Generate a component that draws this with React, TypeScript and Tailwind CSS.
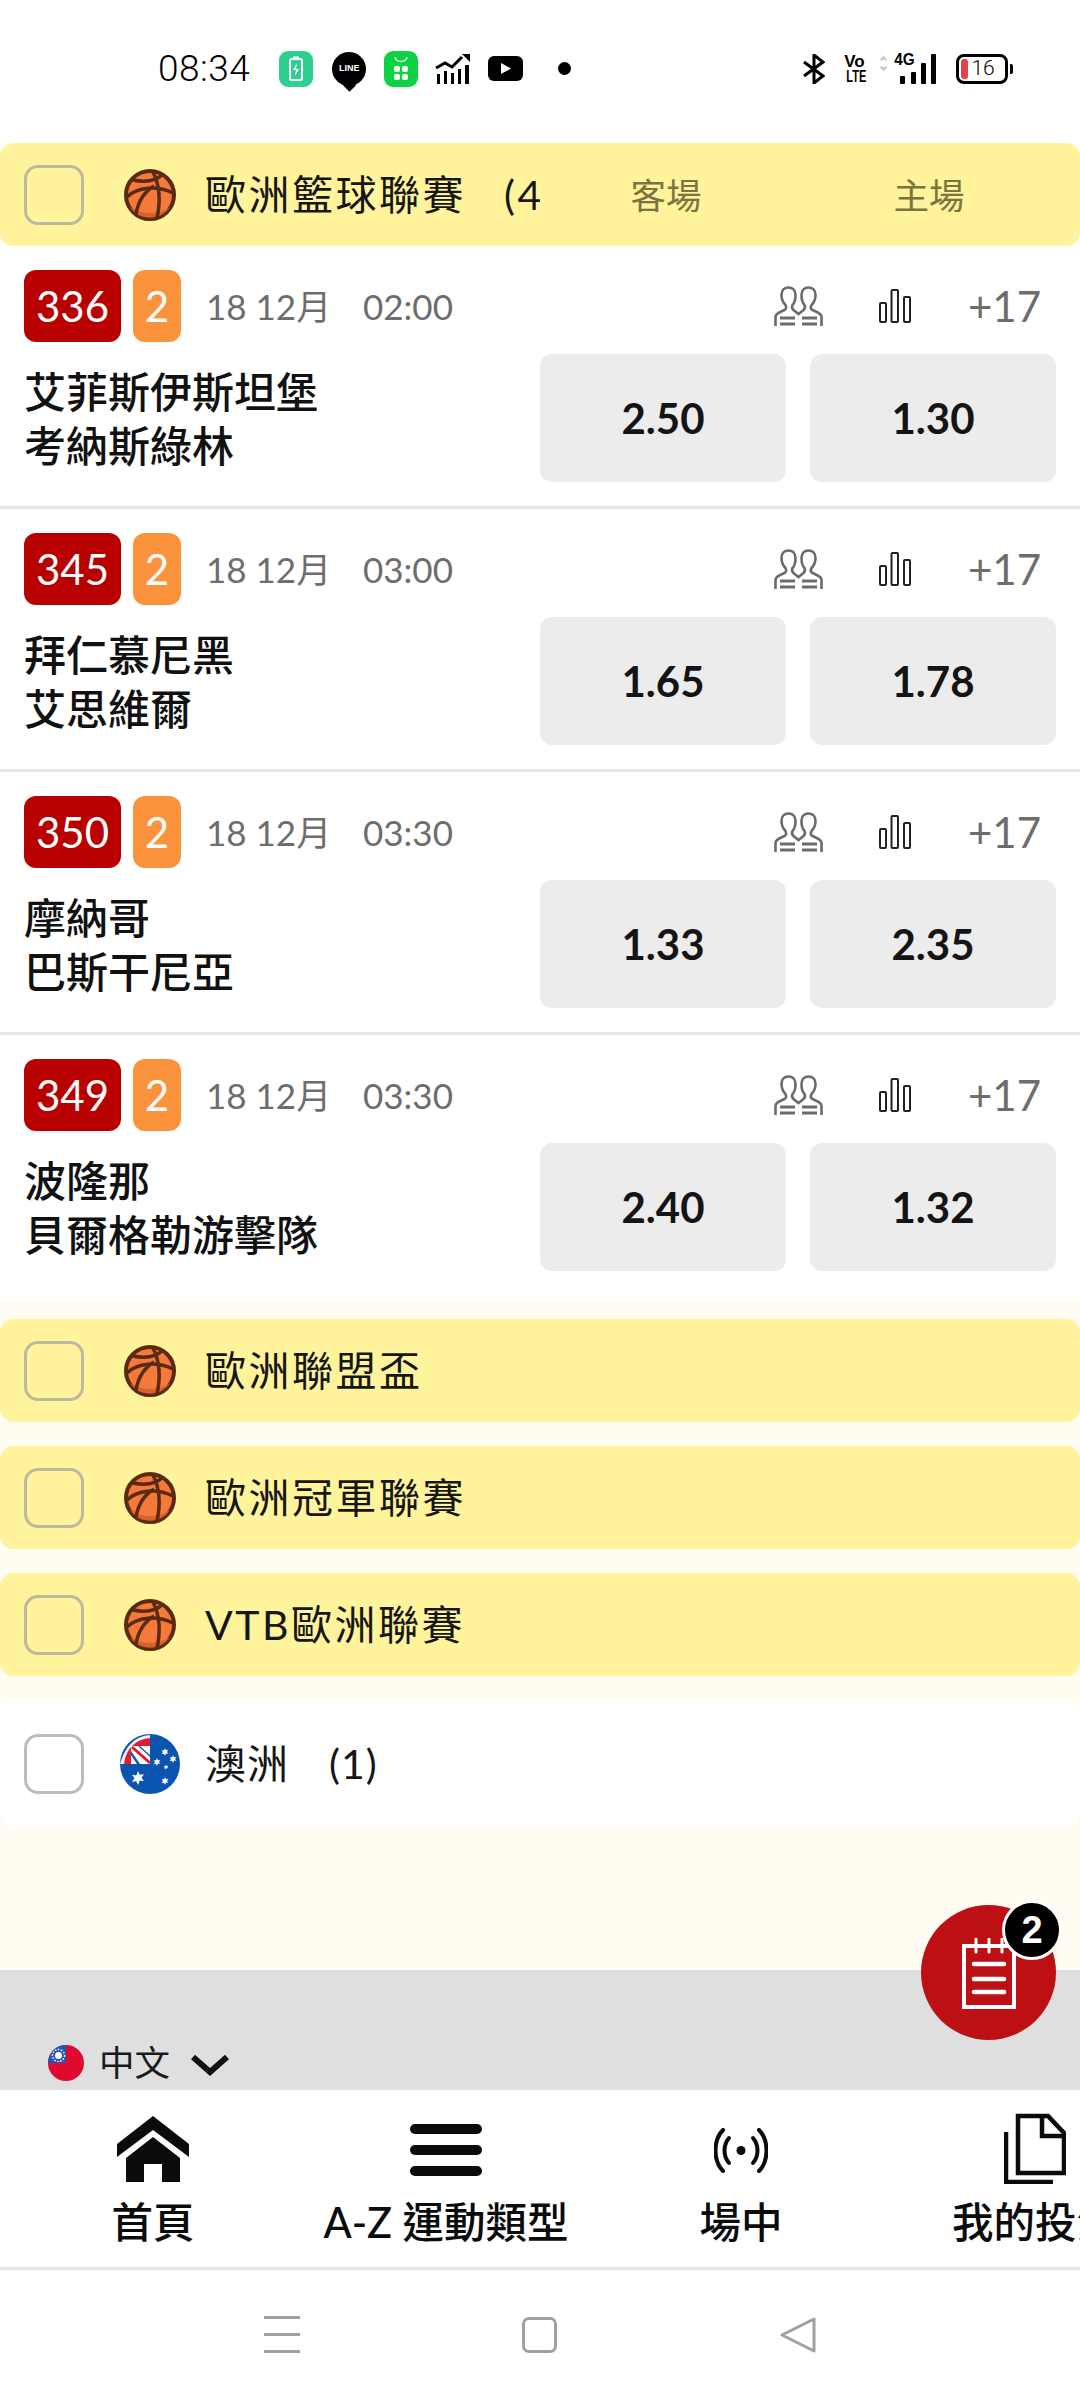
import React from "react";

const matches = [
  { id: "336", time: "02:00", home: "艾菲斯伊斯坦堡", away: "考納斯綠林", a: "2.50", b: "1.30" },
  { id: "345", time: "03:00", home: "拜仁慕尼黑", away: "艾思維爾", a: "1.65", b: "1.78" },
  { id: "350", time: "03:30", home: "摩納哥", away: "巴斯干尼亞", a: "1.33", b: "2.35" },
  { id: "349", time: "03:30", home: "波隆那", away: "貝爾格勒游擊隊", a: "2.40", b: "1.32" },
];

const Ball = () => (
  <svg viewBox="0 0 52 52" className="w-[52px] h-[52px] shrink-0">
    <circle cx="26" cy="26" r="24" fill="#f4793b" stroke="#5a2a12" strokeWidth="4" />
    <path d="M6 38a24 24 0 0 0 40 0c-12 8-28 8-40 0z" fill="#d9622b" />
    <g fill="none" stroke="#5a2a12" strokeWidth="3.500">
      <path d="M9 11c10 2 22 2 30-6" />
      <path d="M3 28c10-10 30-12 46-4" />
      <path d="M29 3c6 12 8 28 4 46" />
      <path d="M12 45c2-12 8-22 18-28" />
    </g>
  </svg>
);

const Checkbox = ({ color }: { color: string }) => (
  <div className={`w-[60px] h-[60px] rounded-[14px] border-[3px] shrink-0 ${color}`} />
);

const League = ({ name }: { name: string }) => (
  <div className="h-[103px] bg-[#fff39b] rounded-[14px] flex items-center pl-[24px]">
    <Checkbox color="border-[#bdb9a0]" />
    <div className="ml-[40px]">
      <Ball />
    </div>
    <span className="ml-[29px] text-[41px] tracking-[2.500px] text-[#161616]">{name}</span>
  </div>
);

const People = () => (
  <svg viewBox="0 0 49 40" className="w-[49px] h-[40px]" fill="none" stroke="#6b6b6b" strokeWidth="2.600">
    <path d="M1.500 40v-9c0-4 5-5 9-7 2-1 2-3 1-5-2-2-4-6-4-10 0-5 3-7.500 7-7.500s7 2.500 7 7.500c0 4-1 8-3 10-1 2-1 3 1 5l5 4 5-4c2-2 2-3 1-5-2-2-3-6-3-10 0-5 3-7.500 7-7.500s7 2.500 7 7.500c0 4-2 8-4 10-1 2-1 4 1 5 4 2 9 3 9 7v9" />
    <path d="M6 32h15M6 38h15M28 32h15M28 38h15" strokeWidth="3" />
  </svg>
);

const Bars = () => (
  <svg viewBox="0 0 32 34" className="w-[32px] h-[34px]" fill="none" stroke="#222" strokeWidth="2">
    <rect x="1" y="14" width="6" height="19" rx="1" />
    <rect x="12.500" y="1" width="6.500" height="32" rx="1" />
    <rect x="25" y="8" width="6" height="25" rx="1" />
  </svg>
);

const Match = ({ m, last }: { m: (typeof matches)[number]; last: boolean }) => (
  <div className={`bg-white h-[263px] pt-[24px] pl-[24px] pr-[24px] ${last ? "" : "border-b-[3px] border-[#e6e6e6]"}`}>
    <div className="h-[72px] flex items-center">
      <div className="w-[97px] h-[72px] rounded-[12px] bg-[#b90000] text-white text-[42px] flex items-center justify-center">
        {m.id}
      </div>
      <div className="ml-[12px] w-[48px] h-[72px] rounded-[12px] bg-[#fb923c] text-white text-[42px] flex items-center justify-center">
        2
      </div>
      <span className="ml-[25px] w-[157px] text-[35px] text-[#6d6d6d] whitespace-nowrap">18 12月</span>
      <span className="text-[35px] text-[#6d6d6d]">{m.time}</span>
      <div className="ml-auto mr-[15px] flex items-center">
        <People />
        <div className="ml-[56px]">
          <Bars />
        </div>
        <span className="ml-[57px] text-[42px] text-[#6d6d6d] leading-none">+17</span>
      </div>
    </div>
    <div className="mt-[12px] flex justify-between">
      <div className="pt-[11px] text-[42px] leading-[54px] font-medium text-[#111]">
        <div>{m.home}</div>
        <div>{m.away}</div>
      </div>
      <div className="flex gap-[24px]">
        <div className="w-[246px] h-[128px] rounded-[12px] bg-[#ececec] flex items-center justify-center text-[42px] font-bold text-[#141414]">
          {m.a}
        </div>
        <div className="w-[246px] h-[128px] rounded-[12px] bg-[#ececec] flex items-center justify-center text-[42px] font-bold text-[#141414]">
          {m.b}
        </div>
      </div>
    </div>
  </div>
);

const StatusBar = () => (
  <div className="h-[143px] bg-white flex items-center pl-[158px] pb-[6px] text-black">
    <span className="text-[37px] font-light font-['Roboto'] tracking-[0.500px]">08:34</span>
    <svg viewBox="0 0 34 36" className="ml-[29px] w-[34px] h-[36px]">
      <rect width="34" height="36" rx="9" fill="#2fd08f" />
      <rect x="11" y="8" width="12" height="21" rx="2" fill="none" stroke="#fff" strokeWidth="2" />
      <rect x="14" y="5.500" width="6" height="3" fill="#fff" />
      <path d="M18 12l-4 7h3l-1 6 4-7h-3z" fill="#fff" />
    </svg>
    <div className="ml-[19px] w-[34px] h-[34px] relative rounded-full bg-black text-white text-[9px] font-bold flex items-center justify-center font-['Liberation_Sans']">
      LINE
      <div className="absolute left-[13px] bottom-[-4px] w-[9px] h-[9px] bg-black rotate-45" />
    </div>
    <svg viewBox="0 0 34 36" className="ml-[18px] w-[34px] h-[36px]">
      <rect width="34" height="36" rx="9" fill="#0fd144" />
      <path d="M11 6c1 6 11 6 12 0" fill="none" stroke="#fff" strokeWidth="1.500" />
      <rect x="10" y="15" width="6" height="6" rx="2" fill="#fff" />
      <rect x="18" y="15" width="6" height="6" rx="2" fill="#fff" />
      <rect x="10" y="23" width="6" height="6" rx="2" fill="#fff" />
      <rect x="18" y="23" width="6" height="6" rx="2" fill="#fff" />
    </svg>
    <svg viewBox="0 0 36 30" className="ml-[17px] w-[36px] h-[30px]">
      <path d="M1 14l9-5 7 4 10-10" fill="none" stroke="#000" strokeWidth="3" />
      <path d="M27 0h8v8z" fill="#000" />
      <path d="M2 20h3v10H2zM9 17h3v13H9zM16 19h3v11h-3zM23 15h3v15h-3zM30 11h4v19h-4z" fill="#000" />
    </svg>
    <svg viewBox="0 0 35 25" className="ml-[17px] w-[35px] h-[25px]">
      <rect width="35" height="25" rx="6" fill="#000" />
      <path d="M13 7l10 5.500-10 5.500z" fill="#fff" />
    </svg>
    <div className="ml-[35px] w-[13px] h-[13px] rounded-full bg-black" />
    <svg viewBox="0 0 22 30" className="ml-[232px] w-[22px] h-[30px]" fill="none" stroke="#000" strokeWidth="3">
      <path d="M1 8l19 14-9 7V1l9 7L1 22" />
    </svg>
    <div className="ml-[17px] w-[24px] text-[17px] leading-[15px] font-bold text-center font-['Liberation_Sans'] text-black">
      <div>Vo</div>
      <div className="scale-x-[0.65]">LTE</div>
    </div>
    <div className="ml-[15px] relative w-[56px] h-[30px]">
      <span className="absolute left-[12px] top-[-3px] text-[17px] font-bold leading-none font-['Liberation_Sans'] scale-x-90">4G</span>
      <span className="absolute left-0 top-[3px] w-[5px] h-[5px] rotate-45 border-t-2 border-l-2 border-[#c4c4c4]" />
      <span className="absolute left-0 top-[11px] w-[5px] h-[5px] rotate-45 border-b-2 border-r-2 border-[#c4c4c4]" />
      <span className="absolute left-[19px] bottom-0 w-[5px] h-[8px] bg-black rounded-[1px]" />
      <span className="absolute left-[30px] bottom-0 w-[5px] h-[12px] bg-black rounded-[1px]" />
      <span className="absolute left-[40px] bottom-0 w-[5px] h-[21px] bg-black rounded-[1px]" />
      <span className="absolute left-[50px] bottom-0 w-[5px] h-[30px] bg-black rounded-[1px]" />
    </div>
    <div className="ml-[19px] relative w-[52px] h-[30px] rounded-[8px] border-[3px] border-black flex items-center">
      <div className="ml-[2px] w-[7px] h-[20px] rounded-[3px] bg-[#e5404c]" />
      <span className="ml-[3px] text-[21px] font-light font-['Roboto'] leading-none">16</span>
      <div className="absolute right-[-8px] top-[7px] w-[3px] h-[10px] bg-black rounded-r-[2px]" />
    </div>
  </div>
);

const Star = ({ x, y, r }: { x: number; y: number; r: number }) => (
  <g transform={`translate(${x} ${y}) scale(${r})`} fill="#fff">
    <path d="M0-1l.25.55.6-.1-.35.5.35.5-.6-.1L0 1l-.25-.55-.6.1.35-.5-.35-.5.6.1z" />
  </g>
);

const Australia = () => (
  <svg viewBox="0 0 60 60" className="w-[60px] h-[60px] shrink-0">
    <circle cx="30" cy="30" r="30" fill="#0b55b0" />
    <path d="M30 1C15 2 5 12 0 30h30z" fill="#f2f2f2" />
    <path d="M30 4C16 5 6 14 4 30h26z" fill="#e11b30" />
    <path d="M11 12h19v18H11z" fill="#fff" />
    <path d="M12 13l18 16" stroke="#e11b30" strokeWidth="3" />
    <path d="M18 12l12 11v-2L20 12zM11 17l9 13h-3l-6-9z" fill="#0b55b0" />
    <Star x={18} y={44} r={7} />
    <Star x={45} y={18} r={4} />
    <Star x={37} y={28} r={4} />
    <Star x={53} y={25} r={4} />
    <Star x={46} y={33} r={2.500} />
    <Star x={45} y={47} r={4} />
  </svg>
);

const Taiwan = () => (
  <svg viewBox="0 0 36 36" className="w-[36px] h-[36px] shrink-0">
    <circle cx="18" cy="18" r="18" fill="#e0092f" />
    <path d="M18 0A18 18 0 0 0 0 18h18z" fill="#2454b5" />
    <circle cx="10.500" cy="10.500" r="3.500" fill="#fff" />
    <circle cx="10.500" cy="10.500" r="6" fill="none" stroke="#fff" strokeWidth="1.500" strokeDasharray="1.500 1.500" />
  </svg>
);

const NavItem = ({ label, children, cls }: { label: string; children: React.ReactNode; cls: string }) => (
  <div className={`flex flex-col items-center shrink-0 whitespace-nowrap ${cls}`}>
    <div className="h-[86px] flex items-end justify-center">{children}</div>
    <span className="mt-[12px] text-[41.500px] leading-[48px] font-medium text-[#0b0b0b]">{label}</span>
  </div>
);

export default function App() {
  return (
    <div className="relative w-[1080px] h-[2400px] overflow-hidden bg-[#fffdf2] [font-family:Lato,'Noto_Sans_CJK_TC',sans-serif]">
      <StatusBar />

      <div className="h-[103px] bg-[#fff39b] rounded-[14px] flex items-center pl-[24px]">
        <Checkbox color="border-[#bdb9a0]" />
        <div className="ml-[40px]">
          <Ball />
        </div>
        <div className="ml-[29px] w-[335px] overflow-hidden whitespace-nowrap text-[41px] tracking-[2.500px] text-[#161616]">
          歐洲籃球聯賽<span className="ml-[38px]">(4)</span>
        </div>
        <div className="ml-[3px] pt-[2px] w-[246px] text-center text-[35.500px] text-[#7a7440]">客場</div>
        <div className="pt-[2px] w-[280px] text-center text-[35.500px] text-[#7a7440]">主場</div>
      </div>

      {matches.map((m, i) => (
        <Match key={m.id} m={m} last={i === matches.length - 1} />
      ))}

      <div className="mt-[21px] flex flex-col gap-[24px]">
        <League name="歐洲聯盟盃" />
        <League name="歐洲冠軍聯賽" />
        <League name="VTB歐洲聯賽" />
        <div className="h-[127px] bg-white rounded-[14px] flex items-center pl-[24px]">
          <Checkbox color="border-[#bcbcbc]" />
          <div className="ml-[36px]">
            <Australia />
          </div>
          <span className="ml-[25px] text-[41px] tracking-[1px] text-[#161616]">澳洲</span>
          <span className="ml-[40px] text-[41px] tracking-[1px] text-[#161616]">(1)</span>
        </div>
      </div>

      <div className="mt-[143px] h-[120px] bg-[#dfdfdf] flex items-end pl-[48px] pb-[9px]">
        <Taiwan />
        <span className="ml-[15px] text-[35.500px] leading-[36px] text-[#1a1a1a]">中文</span>
        <svg viewBox="0 0 38 22" className="ml-[21px] mb-[5px] w-[38px] h-[22px]" fill="none" stroke="#111" strokeWidth="6">
          <path d="M2 3l17 15L36 3" />
        </svg>
      </div>

      <div className="h-[180px] bg-white border-b-[3px] border-[#e2e6e8] flex pl-[111px] pt-[10px] overflow-hidden">
        <NavItem label="首頁" cls="w-[84px]">
          <svg viewBox="0 0 72 66" className="w-[72px] h-[66px] mb-[4px]" fill="#0b0b0b">
            <path d="M36 0L72 28v13L36 14 0 41V28z" />
            <path d="M36 21l27 21v24H45V48H27v18H9V42z" />
          </svg>
        </NavItem>
        <NavItem label="A-Z 運動類型" cls="ml-[129px] w-[244px]">
          <div className="w-[72px] mb-[10px] flex flex-col gap-[11px]">
            <div className="h-[10px] rounded-full bg-[#0b0b0b]" />
            <div className="h-[10px] rounded-full bg-[#0b0b0b]" />
            <div className="h-[10px] rounded-full bg-[#0b0b0b]" />
          </div>
        </NavItem>
        <NavItem label="場中" cls="ml-[131px] w-[84px]">
          <svg viewBox="0 0 54 45" className="w-[54px] h-[45px] mb-[13px]" fill="none" stroke="#0b0b0b" strokeWidth="4" strokeLinecap="round">
            <circle cx="27" cy="22.500" r="4.500" fill="#0b0b0b" stroke="none" />
            <path d="M15 10c-6 7-6 18 0 25M39 10c6 7 6 18 0 25" />
            <path d="M9 2C-1 12-1 33 9 43M45 2c10 10 10 31 0 41" />
          </svg>
        </NavItem>
        <NavItem label="我的投注" cls="ml-[168px] w-[168px]">
          <svg viewBox="0 0 62 71" className="w-[62px] h-[71px] mb-[2px]" fill="none" stroke="#0b0b0b" strokeWidth="4.500">
            <path d="M2 19v50h47" />
            <path d="M14 8v52h46V20L44 3H14z" />
            <path d="M38 3v20h22" />
          </svg>
        </NavItem>
      </div>

      <div className="h-[129px] bg-white flex items-center pl-[264px]">
        <div className="w-[36px] flex flex-col gap-[14px]">
          <div className="h-[3px] bg-[#a0a0a0]" />
          <div className="h-[3px] bg-[#a0a0a0]" />
          <div className="h-[3px] bg-[#a0a0a0]" />
        </div>
        <div className="ml-[222px] w-[35px] h-[36px] rounded-[7px] border-[3px] border-[#a0a0a0]" />
        <svg viewBox="0 0 36 36" className="ml-[223px] w-[36px] h-[36px]" fill="none" stroke="#a0a0a0" strokeWidth="3" strokeLinejoin="round">
          <path d="M2 18L34 2v32z" />
        </svg>
      </div>

      <div className="absolute left-[921px] top-[1905px] w-[135px] h-[135px] rounded-full bg-[#bd1014] flex items-center justify-center">
        <svg viewBox="0 0 54 72" className="w-[54px] h-[72px] mt-[2px]" fill="none" stroke="#fff">
          <path d="M2 8h50v61H2z" strokeWidth="4" />
          <path d="M14 1v13M27 1v13M40 1v13" strokeWidth="3" strokeLinecap="round" />
          <path d="M12 26h30M12 41h30M12 54h30" strokeWidth="4.500" strokeLinecap="round" />
        </svg>
      </div>
      <div className="absolute left-[1002px] top-[1900px] w-[60px] h-[60px] rounded-full bg-black border-[3px] border-white text-white text-[38px] font-bold flex items-center justify-center [font-family:'Liberation_Sans']">
        2
      </div>
    </div>
  );
}
